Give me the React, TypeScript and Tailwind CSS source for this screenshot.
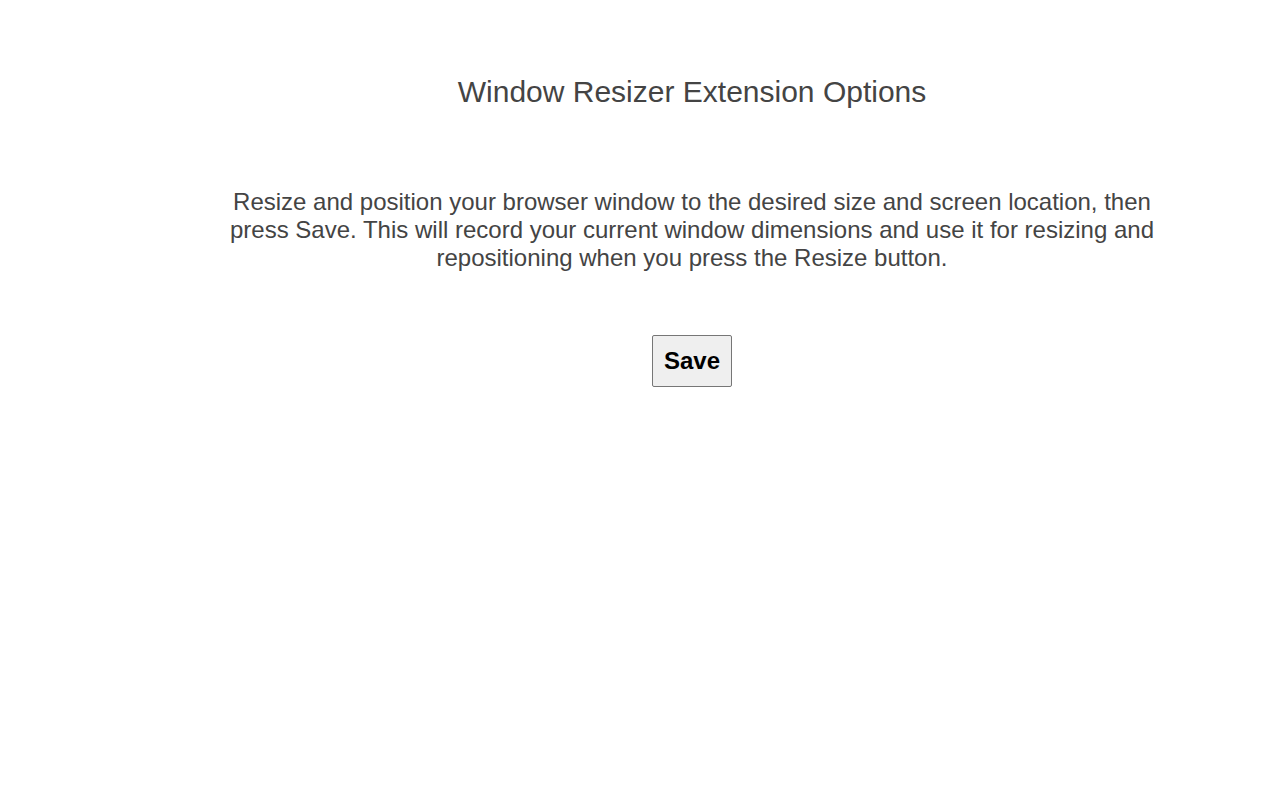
import React from "react";

export default function App() {
  return (
    <div className="min-h-[800px] bg-white" style={{ fontFamily: '"Liberation Sans", Arial, sans-serif' }}>
      <div className="ml-[208px] w-[968px] flex flex-col items-center pt-[73px]">
        <h1 className="text-[30px] leading-[38px] text-[#444444] font-normal">Window Resizer Extension Options</h1>
        <p className="mt-[77px] w-[940px] text-center text-[24px] leading-[28px] text-[#444444]">
          Resize and position your browser window to the desired size and screen location, then press Save. This will record your current window dimensions and use it for resizing and repositioning when you press the Resize button.
        </p>
        <button className="mt-[63px] h-[52px] px-[11px] bg-[#efefef] border border-[#767676] rounded-[2px] text-[24px] font-bold text-black">
          Save
        </button>
      </div>
    </div>
  );
}
